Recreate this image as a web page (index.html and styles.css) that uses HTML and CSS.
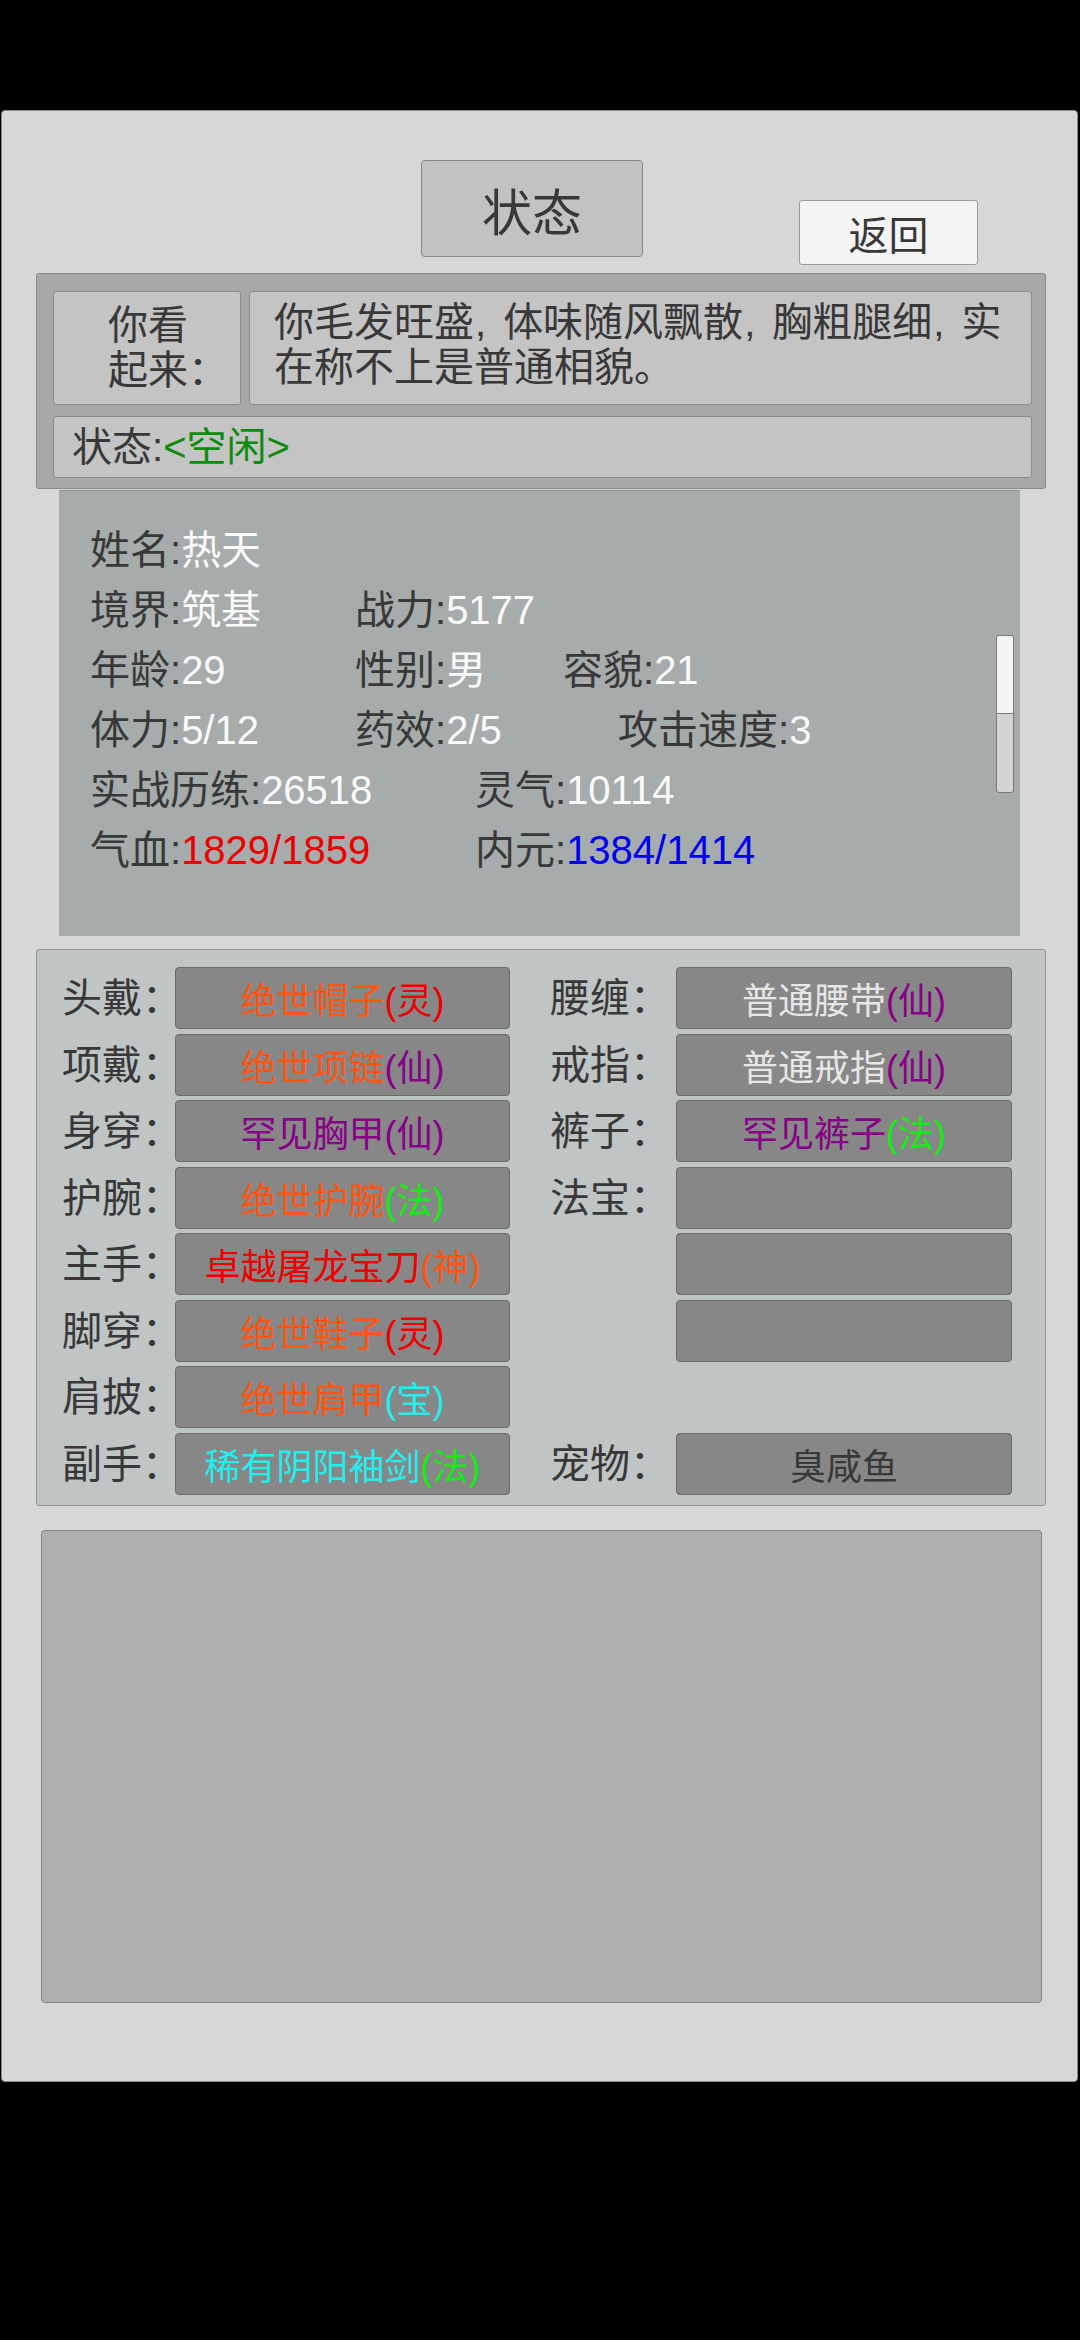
FILE: index.html
```html
<!DOCTYPE html>
<html lang="zh-CN">
<head>
  <meta charset="UTF-8" />
  <meta name="viewport" content="width=device-width, initial-scale=1.0"/>
  <title>状态</title>
  <link rel="stylesheet" href="styles.css">
</head>
<body>
  <div class="screen">
    <div class="top">
      <div class="title-btn">状态</div>
      <div class="back-btn">返回</div>
    </div>

    <div class="look">
      <div class="look-row">
        <div class="cell look-label">你看<br>起来：</div>
        <div class="cell look-text">你毛发旺盛<span class="cm">,</span>体味随风飘散<span class="cm">,</span>胸粗腿细<span class="cm">,</span>实<br>在称不上是普通相貌。</div>
      </div>
      <div class="cell state">状态:<span class="green">&lt;空闲&gt;</span></div>
    </div>

    <div class="stats">
      <div class="row"><span>姓名:<b>热天</b></span></div>
      <div class="row"><span class="c1">境界:<b>筑基</b></span><span>战力:<b>5177</b></span></div>
      <div class="row"><span class="c1">年龄:<b>29</b></span><span class="c2a">性别:<b>男</b></span><span>容貌:<b>21</b></span></div>
      <div class="row"><span class="c1">体力:<b>5/12</b></span><span class="c2b">药效:<b>2/5</b></span><span>攻击速度:<b>3</b></span></div>
      <div class="row"><span class="c1w">实战历练:<b>26518</b></span><span>灵气:<b>10114</b></span></div>
      <div class="row"><span class="c1w">气血:<b class="red">1829/1859</b></span><span>内元:<b class="blue">1384/1414</b></span></div>
      <div class="scroll"><div class="thumb"></div></div>
    </div>

    <div class="gear">
      <div class="lbl">头戴：</div>
      <div class="slot"><span class="orange">绝世帽子</span><span class="red">(灵)</span></div>
      <div class="lbl right">腰缠：</div>
      <div class="slot"><span class="white">普通腰带</span><span class="purple">(仙)</span></div>

      <div class="lbl">项戴：</div>
      <div class="slot"><span class="orange">绝世项链</span><span class="purple">(仙)</span></div>
      <div class="lbl right">戒指：</div>
      <div class="slot"><span class="white">普通戒指</span><span class="purple">(仙)</span></div>

      <div class="lbl">身穿：</div>
      <div class="slot"><span class="purple">罕见胸甲(仙)</span></div>
      <div class="lbl right">裤子：</div>
      <div class="slot"><span class="purple">罕见裤子</span><span class="lime">(法)</span></div>

      <div class="lbl">护腕：</div>
      <div class="slot"><span class="orange">绝世护腕</span><span class="lime">(法)</span></div>
      <div class="lbl right">法宝：</div>
      <div class="slot"></div>

      <div class="lbl">主手：</div>
      <div class="slot"><span class="red">卓越屠龙宝刀</span><span class="orange">(神)</span></div>
      <div></div>
      <div class="slot"></div>

      <div class="lbl">脚穿：</div>
      <div class="slot"><span class="orange">绝世鞋子</span><span class="red">(灵)</span></div>
      <div></div>
      <div class="slot"></div>

      <div class="lbl">肩披：</div>
      <div class="slot"><span class="orange">绝世肩甲</span><span class="cyan">(宝)</span></div>
      <div></div>
      <div></div>

      <div class="lbl">副手：</div>
      <div class="slot"><span class="cyan">稀有阴阳袖剑</span><span class="lime">(法)</span></div>
      <div class="lbl right">宠物：</div>
      <div class="slot"><span class="dark">臭咸鱼</span></div>
    </div>

    <div class="log"></div>
  </div>
</body>
</html>
```

FILE: styles.css
```css
html, body {
  margin: 0;
  background: #000;
}
body {
  height: 2340px;
  font-family: "Liberation Sans", "Noto Sans CJK SC", sans-serif;
  color: #383838;
}
.screen {
  margin: 110px 0 0 1px;
  width: 1077px;
  height: 1972px;
  box-sizing: border-box;
  padding-top: 49px;
  background: #d7d7d7;
  border: 1px solid #8d8d8d;
  border-radius: 4px;
}
.top {
  display: flex;
  align-items: flex-start;
}
.title-btn {
  margin-left: 419px;
  width: 222px;
  height: 97px;
  box-sizing: border-box;
  background: #c2c2c2;
  border: 1px solid #8a8a8a;
  border-radius: 4px;
  display: flex;
  align-items: center;
  justify-content: center;
  font-size: 50px;
}
.back-btn {
  margin-left: 156px;
  margin-top: 40px;
  width: 179px;
  height: 65px;
  box-sizing: border-box;
  background: #f4f4f4;
  border: 1px solid #9a9a9a;
  border-radius: 3px;
  display: flex;
  align-items: center;
  justify-content: center;
  font-size: 40px;
}
.look {
  margin: 8px 0 0 34px;
  width: 1010px;
  height: 216px;
  box-sizing: border-box;
  padding: 17px 13px 10px 16px;
  background: #a8a8a8;
  border: 1px solid #8a8a8a;
  border-radius: 3px;
}
.look-row {
  display: flex;
  gap: 8px;
  height: 114px;
}
.cell {
  box-sizing: border-box;
  background: #c4c4c4;
  border: 1px solid #8c8c8c;
  border-radius: 3px;
  font-size: 40px;
}
.look-label {
  width: 188px;
  padding-left: 54px;
  line-height: 45px;
  display: flex;
  align-items: center;
}
.look-text {
  flex: 1;
  padding: 8px 0 0 24px;
  line-height: 45px;
}
.cm {
  padding: 0 17px 0 1px;
}
.state {
  margin-top: 11px;
  height: 62px;
  padding-left: 18px;
  line-height: 60px;
}
.green {
  color: #0c8c0c;
}
.stats {
  position: relative;
  margin: 1px 0 0 57px;
  width: 961px;
  height: 446px;
  box-sizing: border-box;
  padding: 29px 0 0 31px;
  background: #a6abab;
  border-top: 1px solid #8c9090;
}
.row {
  display: flex;
  font-size: 40px;
  line-height: 60px;
  white-space: nowrap;
}
.row b {
  font-weight: normal;
  color: #fafafa;
}
.c1 { width: 265px; }
.c2a { width: 208px; }
.c2b { width: 263px; }
.c1w { width: 385px; }
.row b.red, .red { color: #ee0000; }
.row b.blue { color: #0000ee; }
.scroll {
  position: absolute;
  right: 6px;
  top: 144px;
  width: 18px;
  height: 158px;
  box-sizing: border-box;
  background: #d4d4d4;
  border: 1px solid #7a7a7a;
  border-radius: 3px;
}
.thumb {
  height: 77px;
  background: #f5f5f5;
  border-bottom: 1px solid #7a7a7a;
  border-radius: 3px 3px 0 0;
}
.gear {
  margin: 13px 0 0 34px;
  width: 1010px;
  height: 557px;
  box-sizing: border-box;
  padding: 17px 0 0 25px;
  background: #bfc4c4;
  border: 1px solid #8f9494;
  border-radius: 3px;
  display: grid;
  grid-template-columns: 113px 335px 166px 336px;
  grid-auto-rows: 62px;
  row-gap: 4.5px;
}
.lbl {
  font-size: 40px;
  align-self: center;
  margin-bottom: 6px;
  white-space: nowrap;
}
.lbl.right {
  padding-left: 40px;
}
.slot {
  box-sizing: border-box;
  background: #878787;
  border: 1px solid #6a6a6a;
  border-radius: 4px;
  display: flex;
  align-items: center;
  justify-content: center;
  font-size: 36px;
  white-space: nowrap;
}
.orange { color: #ff5511; }
.purple { color: #880088; }
.lime { color: #11ee11; }
.cyan { color: #22eeee; }
.white { color: #e6e6e6; }
.dark { color: #383838; }
.log {
  margin: 24px 0 0 39px;
  width: 1001px;
  height: 473px;
  box-sizing: border-box;
  background: #b0afad;
  border: 1px solid #868686;
  border-radius: 4px;
}
```
